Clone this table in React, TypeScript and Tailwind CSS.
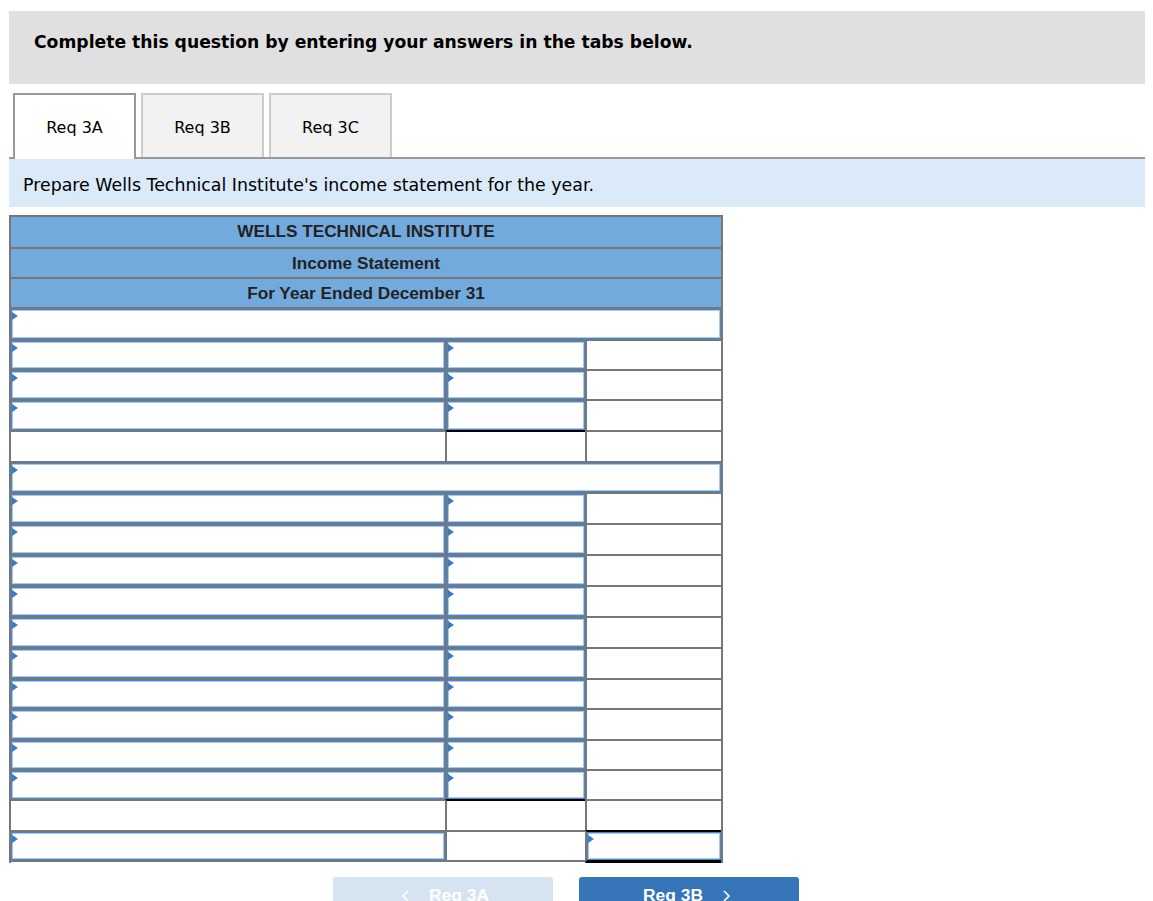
import React from "react";

const GRAY = "border-[#777777]";

function Flag() {
  return (
    <span className="absolute left-0 top-[2px] w-0 h-0 border-y-[4px] border-y-transparent border-l-[6px] border-l-[#3b79c3]" />
  );
}

function Input() {
  return (
    <div className="relative h-full w-full border border-[#4a86c9] shadow-[inset_0_0_0_1px_#a9c8ec] bg-white">
      <Flag />
    </div>
  );
}

type C = { input?: boolean; blackTop?: boolean; blackBottom?: boolean };
type Row = { full?: boolean; cells?: C[] };

const IN: C = { input: true };
const E: C = {};

const rows: Row[] = [
  { full: true },
  { cells: [IN, IN, E] },
  { cells: [IN, IN, E] },
  { cells: [IN, IN, E] },
  { cells: [E, { blackTop: true }, E] },
  { full: true },
  ...Array.from({ length: 10 }, () => ({ cells: [IN, IN, E] })),
  { cells: [E, { blackTop: true }, E] },
  { cells: [IN, E, { input: true, blackTop: true, blackBottom: true }] },
];

const heights = [30, 28, 28, 29, 29, 29, 29, 29, 29, 29, 29, 29, 28, 29, 28, 28, 29, 28];
const widths = ["w-[434px]", "w-[140px]", "w-[136px]"];

export default function App() {
  return (
    <div
      className="w-[1153px] h-[901px] overflow-hidden bg-white"
      style={{ fontFamily: '"DejaVu Sans", Verdana, sans-serif' }}
    >
      <div className="pl-[9px] pt-[11px] w-[1145px]">
        {/* header */}
        <div className="h-[73px] bg-[#e0e0e0] flex items-center pl-[25px] pb-[9px]">
          <span className="font-bold text-[17.2px] text-black">
            Complete this question by entering your answers in the tabs below.
          </span>
        </div>

        {/* tabs */}
        <div className="mt-[9px] h-[66px] border-b-2 border-[#999999] flex items-start pl-[4px] gap-[5px]">
          <div className="w-[123px] h-[66px] bg-white border-2 border-b-0 border-[#999999] flex items-center justify-center text-[16px] text-black pt-[2px]">
            Req 3A
          </div>
          <div className="w-[123px] h-[64px] bg-[#f2f2f2] border-2 border-b-0 border-[#cccccc] flex items-center justify-center text-[16px] text-black pt-[4px]">
            Req 3B
          </div>
          <div className="w-[123px] h-[64px] bg-[#f2f2f2] border-2 border-b-0 border-[#cccccc] flex items-center justify-center text-[16px] text-black pt-[4px]">
            Req 3C
          </div>
        </div>

        {/* instruction */}
        <div className="h-[48px] bg-[#dbeaf8] flex items-center pl-[14px] pt-[4px]">
          <span className="text-[17.4px] text-black">
            Prepare Wells Technical Institute's income statement for the year.
          </span>
        </div>

        {/* table */}
        <div
          className={`mt-[8px] w-[714px] border-x-2 border-t-2 ${GRAY}`}
          style={{ fontFamily: '"Liberation Sans", Arial, sans-serif' }}
        >
          <div className="h-[30px] bg-[#73aade] flex items-center justify-center font-bold text-[17.2px] text-[#222222]">
            WELLS TECHNICAL INSTITUTE
          </div>
          <div className={`h-[30px] border-t-2 ${GRAY} bg-[#73aade] flex items-center justify-center font-bold text-[17.2px] text-[#222222] pt-[1px]`}>
            Income Statement
          </div>
          <div className={`h-[30px] border-t-2 ${GRAY} bg-[#73aade] flex items-center justify-center font-bold text-[17.2px] text-[#222222] pt-[1px]`}>
            For Year Ended December 31
          </div>
          {rows.map((r, i) => {
            const h = heights[i];
            const last = i === rows.length - 1;
            if (r.full) {
              return (
                <div
                  key={i}
                  className={`border-t-2 ${GRAY} bg-white`}
                  style={{ height: h + 2 }}
                >
                  <Input />
                </div>
              );
            }
            return (
              <div key={i} className="flex bg-white">
                {r.cells!.map((c, j) => (
                  <div
                    key={j}
                    className={`${widths[j]} border-t-2 ${
                      c.blackTop ? "border-t-black" : "border-t-[#777777]"
                    } ${j > 0 ? "border-l-2 border-l-[#777777]" : ""} ${
                      last
                        ? c.blackBottom
                          ? "border-b-[3px] border-b-black"
                          : "border-b-2 border-b-[#777777]"
                        : ""
                    }`}
                    style={{ height: h + 2 + (last ? (c.blackBottom ? 3 : 2) : 0) }}
                  >
                    {c.input ? <Input /> : null}
                  </div>
                ))}
              </div>
            );
          })}
        </div>

        {/* nav buttons */}
        <div
          className="mt-[14px] ml-[324px] flex gap-[26px]"
          style={{ fontFamily: '"Liberation Sans", Arial, sans-serif' }}
        >
          <div className="w-[220px] h-[36px] rounded-t-[3px] bg-[#d6e3f1] flex items-center justify-center gap-[18px] text-white font-bold text-[17.4px] pl-[4px]">
            <svg width="10" height="14" viewBox="0 0 10 14" className="mt-[2px]">
              <polyline points="7,2 2,7 7,12" fill="none" stroke="white" strokeWidth="1.6" />
            </svg>
            <span>Req 3A</span>
          </div>
          <div className="w-[220px] h-[36px] rounded-t-[3px] bg-[#3575b8] flex items-center justify-center gap-[18px] text-white font-bold text-[17.4px] pr-[4px]">
            <span>Req 3B</span>
            <svg width="10" height="14" viewBox="0 0 10 14" className="mt-[2px]">
              <polyline points="3,2 8,7 3,12" fill="none" stroke="white" strokeWidth="1.6" />
            </svg>
          </div>
        </div>
      </div>
    </div>
  );
}
